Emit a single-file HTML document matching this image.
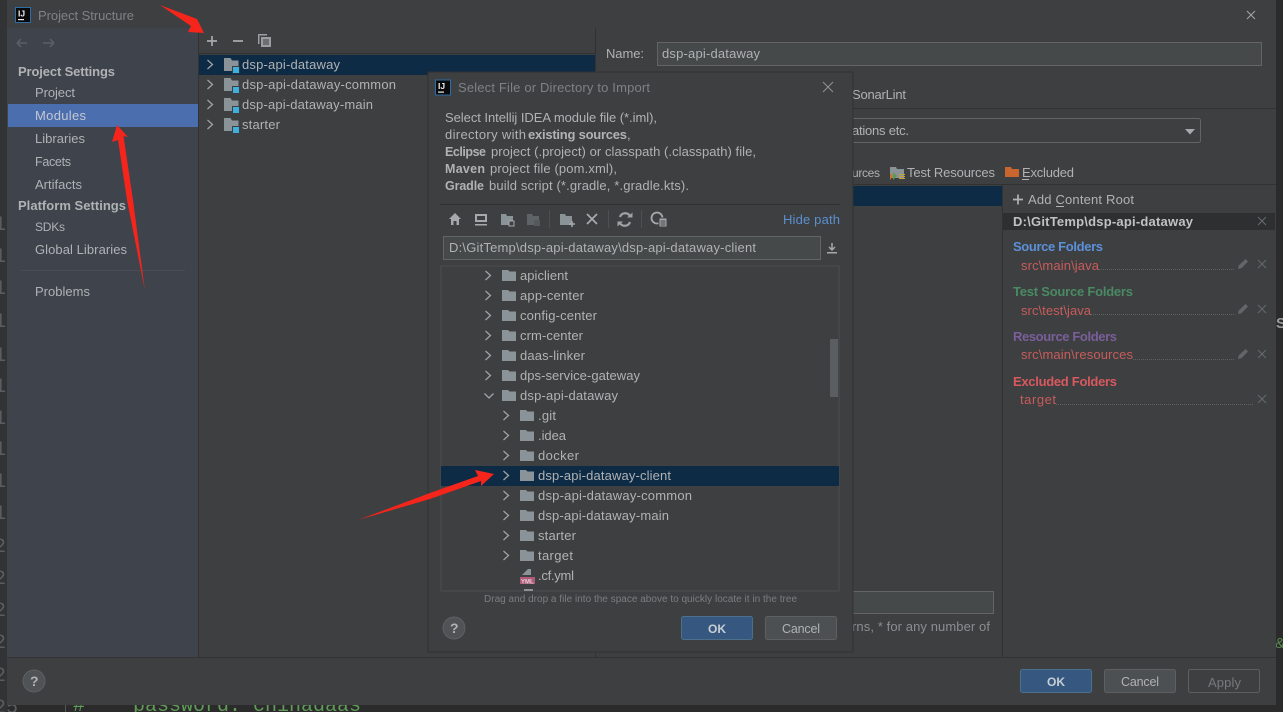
<!DOCTYPE html>
<html><head><meta charset="utf-8"><title>Project Structure</title>
<style>
html,body{margin:0;padding:0;background:#2b2b2b;width:1283px;height:712px;overflow:hidden}
svg{display:block;position:absolute;left:0;top:0}
text{font-family:"Liberation Sans",sans-serif;font-size:13px;fill:#b0b2b4}
.b{font-weight:bold}
.s{font-size:12.5px}
.t{fill:#7f8285}
.r{fill:#c95c5c}
.g{font-family:"Liberation Mono",monospace;font-size:20px;fill:#5a5d5f}
.ch{fill:none;stroke:#a0a3a5;stroke-width:1.3}
.x{fill:none;stroke:#66696b;stroke-width:1.1}
.d{stroke:#5f6264;stroke-width:1;stroke-dasharray:1 1}
</style></head><body>
<svg width="1283" height="712" viewBox="0 0 1283 712" xmlns="http://www.w3.org/2000/svg">
<defs>
<g id="chev"><path class="ch" d="M-2.500 -4 L2.500 .5 L-2.500 5"/></g>
<g id="fold"><path d="M0 -5 H6 L7.500 -3.500 H14 V6 H0 Z" fill="#8a9398"/></g>
<g id="mod"><path d="M0 -7 H6.500 L8 -4.500 H14.500 V6 H0 Z" fill="#8a9398"/><rect x="8" y="1" width="7.500" height="7.500" fill="#3c3f41"/><rect x="9" y="2" width="6" height="6" fill="#3fb0dc"/></g>
<g id="xm"><path class="x" d="M-4 -4 L4 4 M4 -4 L-4 4"/></g>
<g id="pen"><path d="M-5 5 L-4.300 1.500 L2.500 -5 L5 -2.500 L-1.500 4.300 Z" fill="#626668"/></g>
<g id="logo"><rect x="0" y="0" width="15" height="15" fill="#0a0a0a" stroke="#2b6ea8" stroke-width="1"/><text x="2.500" y="9" style="font-size:8.500px;font-weight:bold;fill:#eee">IJ</text><rect x="2.500" y="11.500" width="6" height="1.200" fill="#eee"/></g>
</defs>

<!-- backdrop editor -->
<rect width="1283" height="712" fill="#2b2b2b"/>
<rect x="0" y="0" width="7" height="712" fill="#313335"/>
<text x="-6" y="230" class="g">10</text><text x="-6" y="262" class="g">11</text><text x="-6" y="294" class="g">12</text>
<text x="-6" y="327" class="g">13</text><text x="-6" y="361" class="g">14</text><text x="-6" y="392" class="g">15</text>
<text x="-6" y="424" class="g">16</text><text x="-6" y="455" class="g">17</text><text x="-6" y="487" class="g">18</text>
<text x="-6" y="519" class="g">19</text><text x="-6" y="552" class="g">20</text><text x="-6" y="584" class="g">21</text>
<text x="-6" y="616" class="g">22</text><text x="-6" y="648" class="g">23</text><text x="-6" y="681" class="g">24</text>
<text x="-6" y="713" class="g">25</text>
<rect x="65" y="705" width="1" height="7" fill="#555"/>
<text x="73" y="711" style="font-family:'Liberation Mono',monospace;font-size:20px;fill:#5f9a58">#</text>
<text x="133" y="711" style="font-family:'Liberation Mono',monospace;font-size:20px;fill:#5f9a58">password: chinadaas</text>
<text x="1276" y="328" class="b" style="font-size:15px;fill:#9a9a9a">S</text>
<text x="1275" y="648" style="font-size:15px;fill:#5c8a50">&amp;</text>

<!-- main dialog -->
<rect x="7" y="0" width="1269" height="705" fill="#3d3f41"/>
<rect x="7" y="28" width="191" height="629" fill="#3e434c"/>
<use href="#logo" x="15.500" y="7.500"/>
<text x="38" y="20" class="t" textLength="96">Project Structure</text>
<path d="M1247 11 L1255 19 M1255 11 L1247 19" fill="none" stroke="#a0a3a5" stroke-width="1.100"/>

<!-- sidebar -->
<path d="M17 43 H27 M17 43 L21 39 M17 43 L21 47 M43 43 H54 M54 43 L50 39 M54 43 L50 47" fill="none" stroke="#5c6066" stroke-width="1.500"/>
<text x="18" y="76" class="b" textLength="97">Project Settings</text>
<text x="35" y="97" textLength="40">Project</text>
<rect x="8" y="104" width="190" height="23" fill="#4b6eaf"/>
<text x="35" y="120" textLength="51" style="fill:#c3c8d0">Modules</text>
<text x="35" y="143" textLength="50">Libraries</text>
<text x="35" y="166" class="s" textLength="36">Facets</text>
<text x="35" y="189" textLength="47">Artifacts</text>
<text x="18" y="210" class="b" textLength="108">Platform Settings</text>
<text x="35" y="231" style="font-size:12px" textLength="30">SDKs</text>
<text x="35" y="254" textLength="92">Global Libraries</text>
<rect x="20" y="270" width="165" height="1" fill="#474c55"/>
<text x="35" y="296" textLength="55">Problems</text>

<rect x="198" y="28" width="1" height="629" fill="#323232"/>
<!-- module toolbar -->
<path d="M207 41 H217 M212 36 V46 M233 41 H243" stroke="#a6a9ab" stroke-width="1.700" fill="none"/>
<path d="M258 34 H267 V35.500 H259.500 V44 H258 Z" fill="#9a9ea0"/>
<path d="M261 37 H271 V47 H261 Z M263 39.500 H269 V40.500 H263 Z M263 41.500 H269 V42.500 H263 Z M263 43.500 H269 V44.500 H263 Z" fill="#9a9ea0" fill-rule="evenodd"/>
<rect x="199" y="53" width="396" height="1" fill="#323232"/>
<rect x="199" y="55" width="396" height="20" fill="#0d2b45"/>
<use href="#chev" x="210" y="64"/>
<use href="#mod" x="224" y="65"/>
<text x="242" y="69" textLength="98">dsp-api-dataway</text>
<use href="#chev" x="210" y="84"/>
<use href="#mod" x="224" y="85"/>
<text x="242" y="89" textLength="154">dsp-api-dataway-common</text>
<use href="#chev" x="210" y="104"/>
<use href="#mod" x="224" y="105"/>
<text x="242" y="109" textLength="131">dsp-api-dataway-main</text>
<use href="#chev" x="210" y="124"/>
<use href="#mod" x="224" y="125"/>
<text x="242" y="129" textLength="38">starter</text>
<rect x="595" y="28" width="1" height="629" fill="#323232"/>

<!-- right panel -->
<text x="606" y="58" textLength="38">Name:</text>
<rect x="657.500" y="42.500" width="604" height="23" fill="#45494a" stroke="#646464"/>
<text x="662" y="58" textLength="98">dsp-api-dataway</text>
<text x="852" y="99" textLength="54">SonarLint</text>
<rect x="596" y="108" width="680" height="1" fill="#323232"/>
<rect x="600.500" y="118.500" width="600" height="24" rx="2" fill="#3d3f41" stroke="#646464"/>
<text x="852" y="135" textLength="57">ations etc.</text>
<path d="M1185 129 H1195 L1190 134.500 Z" fill="#a6a9ab"/>
<text x="852" y="177" style="font-size:12px" textLength="28">urces</text>
<path d="M890 167 H896 L897 169 H904 V178 H890 Z" fill="#8a9398"/>
<path d="M890 173 L893 176 L890 180 Z" fill="#c9752d"/><path d="M893 172 L897 176 L893 180 Z" fill="#5b9a4e"/>
<path d="M899 174 H905 V175 H899 Z M899 176 H905 V177 H899 Z M899 178 H905 V179 H899 Z" fill="#c7a33a"/>
<text x="907" y="177" textLength="88">Test Resources</text>
<path d="M1005 167 H1011 L1012 169 H1019 V177 H1005 Z" fill="#c8662d"/>
<text x="1022" y="177" textLength="52">Excluded</text>
<rect x="1022" y="179" width="7" height="1" fill="#b0b2b4"/>
<rect x="596" y="184" width="680" height="1" fill="#323232"/>
<rect x="853" y="186" width="150" height="20" fill="#0d2b45"/>
<rect x="1002" y="185" width="1" height="472" fill="#323232"/>

<path d="M1013 199.500 H1023 M1018 194.500 V204.500" stroke="#b0b2b4" stroke-width="1.700" fill="none"/>
<text x="1028" y="204" textLength="106">Add Content Root</text>
<rect x="1056" y="206" width="8" height="1" fill="#b0b2b4"/>
<rect x="1003" y="213" width="272" height="17" fill="#2d2f31"/>
<text x="1013" y="226" class="b" textLength="180" style="fill:#c0c2c4">D:\GitTemp\dsp-api-dataway</text>
<use href="#xm" x="1262" y="221"/>

<text x="1013" y="251" class="b" textLength="90" style="fill:#5c90d8">Source Folders</text>
<text x="1021" y="270" class="r" textLength="78">src\main\java</text>
<line x1="1099" y1="269.500" x2="1235" y2="269.500" class="d"/>
<use href="#pen" x="1243" y="264"/><use href="#xm" x="1262" y="264"/>

<text x="1013" y="296" class="b" textLength="120" style="fill:#4a8a63">Test Source Folders</text>
<text x="1021" y="315" class="r" textLength="70">src\test\java</text>
<line x1="1091" y1="314.500" x2="1235" y2="314.500" class="d"/>
<use href="#pen" x="1243" y="309"/><use href="#xm" x="1262" y="309"/>

<text x="1013" y="341" class="b" textLength="104" style="fill:#7a5f9a">Resource Folders</text>
<text x="1021" y="359" class="r" textLength="112">src\main\resources</text>
<line x1="1133" y1="359.500" x2="1235" y2="359.500" class="d"/>
<use href="#pen" x="1243" y="354"/><use href="#xm" x="1262" y="354"/>

<text x="1013" y="386" class="b" textLength="104" style="fill:#d8595e">Excluded Folders</text>
<text x="1020" y="404" class="r" textLength="36">target</text>
<line x1="1056" y1="404.500" x2="1253" y2="404.500" class="d"/>
<use href="#xm" x="1262" y="399"/>

<rect x="840" y="591.500" width="153.500" height="22" fill="#45494a" stroke="#646464"/>
<text x="852" y="631" textLength="138" style="fill:#8b8e90">rns, * for any number of</text>

<!-- bottom bar main -->
<rect x="7" y="657" width="1269" height="1" fill="#323232"/>
<circle cx="34" cy="681" r="11" fill="#505355" stroke="#5e6163"/>
<text x="30" y="686" class="b" style="font-size:14px">?</text>
<rect x="1020.500" y="669.500" width="71" height="23" rx="2" fill="#365880" stroke="#4c708c"/>
<text x="1047" y="686" class="b" style="font-size:12px;fill:#c8ced4" textLength="18">OK</text>
<rect x="1104.500" y="669.500" width="71" height="23" rx="2" fill="#4c5052" stroke="#5e6060"/>
<text x="1121" y="686" class="s" textLength="38">Cancel</text>
<rect x="1188.500" y="669.500" width="71" height="23" rx="2" fill="none" stroke="#5e6060"/>
<text x="1208" y="687" textLength="33" style="fill:#777a7c">Apply</text>

<!-- import dialog -->
<rect x="428" y="72" width="425" height="580" fill="#3d3f41" stroke="#323232"/>
<use href="#logo" x="435.500" y="80"/>
<text x="458" y="92" class="t" textLength="192">Select File or Directory to Import</text>
<path d="M823 82 L833 92 M833 82 L823 92" fill="none" stroke="#8d9092" stroke-width="1.100"/>

<text x="445" y="122" textLength="212">Select Intellij IDEA module file (*.iml),</text>
<text x="445" y="139" textLength="81">directory with</text>
<text x="528" y="139" class="b" textLength="99">existing sources</text><text x="627" y="139">,</text>
<text x="445" y="156" class="b s" textLength="41">Eclipse</text>
<text x="491" y="156" textLength="265">project (.project) or classpath (.classpath) file,</text>
<text x="445" y="173" class="b s" textLength="40">Maven</text>
<text x="490" y="173" textLength="127">project file (pom.xml),</text>
<text x="445" y="190" class="b s" textLength="39">Gradle</text>
<text x="489" y="190" textLength="200">build script (*.gradle, *.gradle.kts).</text>
<rect x="440" y="204" width="400" height="1" fill="#2f3031"/>

<!-- dialog toolbar -->
<path d="M449 219 L455 213 L461 219 H459 V225 H456.500 V221 H453.500 V225 H451 V219 Z" fill="#a6a9ab"/>
<path d="M475 214 H487 V222 H475 Z M477 216 V220 H485 V216 Z M475 224 H487 V225.500 H475 Z" fill="#a6a9ab" fill-rule="evenodd"/>
<path d="M501 214 H506 L507 216 H513 V225 H501 Z" fill="#8a9398"/><rect x="509" y="221" width="5" height="5" fill="#3d3f41" stroke="#a6a9ab"/>
<path d="M527 214 H532 L533 216 H539 V225 H527 Z" fill="#5d6366"/><rect x="534" y="220" width="6" height="6" fill="#55595c"/>
<rect x="549" y="210" width="1" height="18" fill="#4d5052"/>
<path d="M560 214 H565 L566 216 H572 V225 H560 Z" fill="#8a9398"/><path d="M569 224 H575 M572 221 V227" stroke="#a6a9ab" stroke-width="1.500"/>
<path d="M587 214 L597 224 M597 214 L587 224" stroke="#a6a9ab" stroke-width="1.800"/>
<rect x="608" y="210" width="1" height="18" fill="#4d5052"/>
<path d="M620 217 A5.500 5.500 0 0 1 630 216 M630 222 A5.500 5.500 0 0 1 620 223" fill="none" stroke="#9ea3a6" stroke-width="2.200"/>
<path d="M627 217.500 H632.500 V212.500 Z M623 221.500 H617.500 V226.500 Z" fill="#9ea3a6"/>
<rect x="641" y="210" width="1" height="18" fill="#4d5052"/>
<circle cx="657" cy="218" r="5.500" fill="none" stroke="#a6a9ab" stroke-width="1.800"/>
<rect x="659" y="218" width="8" height="9" fill="#a6a9ab" stroke="#3d3f41"/>
<path d="M660.500 221 H665.500 M660.500 223 H665.500 M660.500 225 H665.500" stroke="#3d3f41" stroke-width="1"/>
<text x="783" y="224" textLength="57" style="fill:#5a8fd0">Hide path</text>

<rect x="443.500" y="236.500" width="377" height="23" fill="#45494a" stroke="#646464"/>
<text x="449" y="252" textLength="307">D:\GitTemp\dsp-api-dataway\dsp-api-dataway-client</text>
<path d="M832 243 V250 M829 247 L832 250 L835 247" fill="none" stroke="#a6a9ab" stroke-width="1.500"/>
<rect x="827" y="252" width="10" height="1.500" fill="#a6a9ab"/>

<!-- file tree -->
<rect x="441" y="266" width="398" height="325" fill="#3d3f41" stroke="#4a4c4e"/>
<use href="#chev" x="488" y="275"/><use href="#fold" x="502" y="275"/><text x="520" y="280" textLength="48">apiclient</text>
<use href="#chev" x="488" y="295"/><use href="#fold" x="502" y="295"/><text x="520" y="300" textLength="64">app-center</text>
<use href="#chev" x="488" y="315"/><use href="#fold" x="502" y="315"/><text x="520" y="320" textLength="77">config-center</text>
<use href="#chev" x="488" y="335"/><use href="#fold" x="502" y="335"/><text x="520" y="340" textLength="63">crm-center</text>
<use href="#chev" x="488" y="355"/><use href="#fold" x="502" y="355"/><text x="520" y="360" textLength="65">daas-linker</text>
<use href="#chev" x="488" y="375"/><use href="#fold" x="502" y="375"/><text x="520" y="380" textLength="120">dps-service-gateway</text>
<path class="ch" d="M484.500 393.500 L489 398 L493.500 393.500"/><use href="#fold" x="502" y="395"/><text x="520" y="400" textLength="98">dsp-api-dataway</text>
<use href="#chev" x="506" y="415"/><use href="#fold" x="520" y="415"/><text x="538" y="420" textLength="18">.git</text>
<use href="#chev" x="506" y="435"/><use href="#fold" x="520" y="435"/><text x="538" y="440" textLength="28">.idea</text>
<use href="#chev" x="506" y="455"/><use href="#fold" x="520" y="455"/><text x="538" y="460" textLength="41">docker</text>
<rect x="441" y="466" width="398" height="20" fill="#0d2b45"/>
<use href="#chev" x="506" y="475"/><use href="#fold" x="520" y="475"/><text x="538" y="480" textLength="133">dsp-api-dataway-client</text>
<use href="#chev" x="506" y="495"/><use href="#fold" x="520" y="495"/><text x="538" y="500" textLength="154">dsp-api-dataway-common</text>
<use href="#chev" x="506" y="515"/><use href="#fold" x="520" y="515"/><text x="538" y="520" textLength="131">dsp-api-dataway-main</text>
<use href="#chev" x="506" y="535"/><use href="#fold" x="520" y="535"/><text x="538" y="540" textLength="38">starter</text>
<use href="#chev" x="506" y="555"/><use href="#fold" x="520" y="555"/><text x="538" y="560" textLength="35">target</text>
<path d="M522 575 L528 569 H531 V575 Z" fill="#8a9398"/><rect x="520" y="577" width="15" height="7" fill="#b05a78"/>
<text x="521" y="583.500" class="b" style="font-size:6px;fill:#e0d0d8">YML</text>
<text x="538" y="580" textLength="36">.cf.yml</text>
<rect x="524" y="589" width="9" height="2" fill="#8a9398"/>
<rect x="830" y="339" width="8" height="58" fill="#5b5e60"/>
<text x="484" y="602" textLength="313" style="font-size:10px;fill:#7b7e80">Drag and drop a file into the space above to quickly locate it in the tree</text>
<circle cx="454" cy="628" r="11" fill="#505355" stroke="#5e6163"/>
<text x="450" y="633" class="b" style="font-size:14px">?</text>
<rect x="681.500" y="616.500" width="71" height="23" rx="2" fill="#365880" stroke="#4c708c"/>
<text x="708" y="633" class="b" style="font-size:12px;fill:#c8ced4" textLength="18">OK</text>
<rect x="765.500" y="616.500" width="71" height="23" rx="2" fill="#4c5052" stroke="#5e6060"/>
<text x="782" y="633" class="s" textLength="38">Cancel</text>

<!-- red arrows -->
<path d="M160 5 L197 19 L204 33 L188 32 L191 26 Z" fill="#f5251c"/>
<path d="M117 125 L128 137 L123.500 136 L133 200 L145 291 L127 200 L118 140 L112 142 Z" fill="#f5251c"/>
<path d="M494 474 L475 470 L478 476 L430 493 L358 520 L430 499 L481 481 L481 486 Z" fill="#f5251c"/>
</svg>
</body></html>
